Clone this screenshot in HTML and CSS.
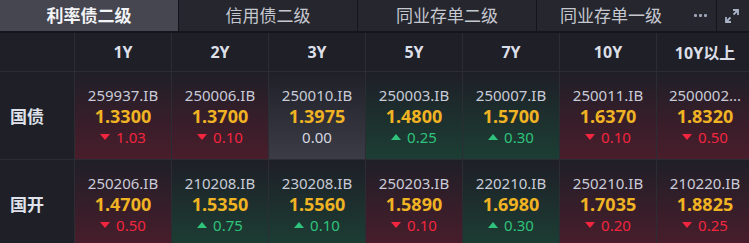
FILE: index.html
```html
<!DOCTYPE html>
<html lang="zh-CN">
<head>
  <meta charset="UTF-8" />
  <title>二级收益率</title>
  <link rel="stylesheet" href="styles.css">
</head>
<body>
  <div class="tabs">
    <div class="tab active">利率债二级</div>
    <div class="tab">信用债二级</div>
    <div class="tab">同业存单二级</div>
    <div class="tab tab-last">同业存单一级</div>
    <div class="more"><b></b><b></b><b></b></div>
    <div class="expand">
      <svg viewBox="0 0 16 16" width="16" height="16">
        <path d="M9 2h5v5M14 2L9.5 6.5M7 14H2V9M2 14l4.5-4.5" fill="none" stroke="#a9b2c6" stroke-width="1.8"/>
      </svg>
    </div>
  </div>

  <div class="grid">
    <div class="head"></div>
    <div class="head">1Y</div>
    <div class="head">2Y</div>
    <div class="head">3Y</div>
    <div class="head">5Y</div>
    <div class="head">7Y</div>
    <div class="head">10Y</div>
    <div class="head">10Y以上</div>

    <div class="label">国债</div>
    <div class="cell down"><span class="code">259937.IB</span><span class="val">1.3300</span><span class="chg"><i></i>1.03</span></div>
    <div class="cell down"><span class="code">250006.IB</span><span class="val">1.3700</span><span class="chg"><i></i>0.10</span></div>
    <div class="cell flat"><span class="code">250010.IB</span><span class="val">1.3975</span><span class="chg">0.00</span></div>
    <div class="cell up"><span class="code">250003.IB</span><span class="val">1.4800</span><span class="chg"><i></i>0.25</span></div>
    <div class="cell up"><span class="code">250007.IB</span><span class="val">1.5700</span><span class="chg"><i></i>0.30</span></div>
    <div class="cell down"><span class="code">250011.IB</span><span class="val">1.6370</span><span class="chg"><i></i>0.10</span></div>
    <div class="cell down"><span class="code">2500002...</span><span class="val">1.8320</span><span class="chg"><i></i>0.50</span></div>

    <div class="label">国开</div>
    <div class="cell down"><span class="code">250206.IB</span><span class="val">1.4700</span><span class="chg"><i></i>0.50</span></div>
    <div class="cell up"><span class="code">210208.IB</span><span class="val">1.5350</span><span class="chg"><i></i>0.75</span></div>
    <div class="cell up"><span class="code">230208.IB</span><span class="val">1.5560</span><span class="chg"><i></i>0.10</span></div>
    <div class="cell down"><span class="code">250203.IB</span><span class="val">1.5890</span><span class="chg"><i></i>0.10</span></div>
    <div class="cell up"><span class="code">220210.IB</span><span class="val">1.6980</span><span class="chg"><i></i>0.30</span></div>
    <div class="cell down"><span class="code">250210.IB</span><span class="val">1.7035</span><span class="chg"><i></i>0.20</span></div>
    <div class="cell down"><span class="code">210220.IB</span><span class="val">1.8825</span><span class="chg"><i></i>0.25</span></div>
  </div>
</body>
</html>
```

FILE: styles.css
```css
body {
  margin: 0;
  width: 749px;
  height: 243px;
  overflow: hidden;
  background-color: #1e1f27;
  font-family: "Noto Sans", "Noto Sans CJK SC", sans-serif;
  color: #c9ccd6;
}
.tabs {
  display: flex;
  height: 31px;
  background-color: #25262e;
  border-bottom: 2px solid #15161b;
}
.tab {
  width: 178px;
  line-height: 31px;
  text-align: center;
  font-size: 17px;
  color: #c6c8d0;
  border-right: 1px solid #15161b;
}
.tab.active {
  background-color: #45464f;
  color: #f2f3f6;
  font-weight: bold;
}
.tab.tab-last {
  width: 148px;
  border-right: none;
}
.more {
  width: 31px;
  display: flex;
  align-items: center;
  justify-content: center;
  gap: 2px;
  border-right: 1px solid #15161b;
}
.more b {
  width: 3px;
  height: 3px;
  border-radius: 1px;
  background-color: #9ba2b4;
}
.expand {
  width: 30px;
  display: flex;
  align-items: center;
  justify-content: center;
}
.grid {
  display: grid;
  grid-template-columns: 74px repeat(7, 97px);
  grid-template-rows: 39px 88px 88px;
  width: 753px;
}
.head {
  display: flex;
  align-items: center;
  justify-content: center;
  font-size: 16px;
  font-weight: bold;
  color: #dcdfe8;
  border-left: 1px solid #2b2c34;
  border-bottom: 1px solid #2b2c34;
}
.head:first-child {
  border-left: none;
}
.label {
  display: flex;
  align-items: center;
  padding-left: 10px;
  font-size: 17px;
  font-weight: bold;
  color: #dfe2ea;
  border-bottom: 1px solid #2b2c34;
}
.cell {
  display: flex;
  flex-direction: column;
  align-items: center;
  justify-content: center;
  border-left: 1px solid #2b2c34;
  border-bottom: 1px solid #2b2c34;
}
.cell.down {
  background: linear-gradient(to bottom, #1f1f28, #4a1d2b);
}
.cell.up {
  background: linear-gradient(to bottom, #1e1f27, #1c3e34);
}
.cell.flat {
  background: linear-gradient(to bottom, #1f2028, #3b3c45);
}
.code {
  font-size: 15px;
  line-height: 20px;
  color: #c9ccd8;
}
.val {
  font-size: 18px;
  line-height: 22px;
  font-weight: bold;
  color: #f0b323;
}
.chg {
  display: flex;
  align-items: center;
  font-size: 15px;
  line-height: 20px;
  color: #d4d7e0;
}
.down .chg {
  color: #f3253f;
}
.up .chg {
  color: #2fc37c;
}
.chg i {
  width: 0;
  height: 0;
  margin-right: 6px;
  border-left: 5px solid transparent;
  border-right: 5px solid transparent;
}
.down .chg i {
  border-top: 6px solid #f3253f;
}
.up .chg i {
  border-bottom: 6px solid #2fc37c;
}
```
